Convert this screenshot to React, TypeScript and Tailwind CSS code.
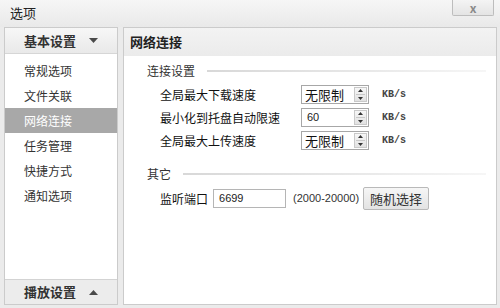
import React from "react";

const cjk = { fontFamily: '"Noto Sans CJK SC", "Noto Sans", sans-serif' };

const navItems = ["常规选项", "文件关联", "网络连接", "任务管理", "快捷方式", "通知选项"];

function Triangle({ up }: { up?: boolean }) {
  return (
    <svg width="9" height="5" viewBox="0 0 9 5">
      <path d={up ? "M0 5 L4.5 0 L9 5 Z" : "M0 0 L9 0 L4.5 5 Z"} fill="#4a4a4a" />
    </svg>
  );
}

function SpinBox({ value, ascii }: { value: string; ascii?: boolean }) {
  return (
    <div className="flex h-[19px] w-[68px] items-stretch border border-[#a7a7a7] bg-white">
      <div
        className={
          ascii
            ? "flex flex-1 items-center pl-[5px] text-[11px] text-[#222]"
            : "flex flex-1 items-center pl-[3px] text-[13px] text-[#111]"
        }
        style={ascii ? { fontFamily: '"Liberation Sans", sans-serif' } : undefined}
      >
        {value}
      </div>
      <div className="my-[1px] mr-[1px] flex w-[13px] flex-col items-center justify-center gap-[2px] border border-[#c9c9c9] bg-gradient-to-b from-[#f7f7f7] to-[#e2e2e2]">
        <svg width="5" height="3" viewBox="0 0 5 3">
          <path d="M0 3 L2.5 0 L5 3 Z" fill="#333" />
        </svg>
        <div className="h-px w-[9px] bg-[#c8c8c8]" />
        <svg width="5" height="3" viewBox="0 0 5 3">
          <path d="M0 0 L5 0 L2.5 3 Z" fill="#333" />
        </svg>
      </div>
    </div>
  );
}

function Unit() {
  return (
    <span
      className="ml-[13px] text-[10px] font-bold text-[#444]"
      style={{ fontFamily: '"Liberation Mono", monospace' }}
    >
      KB/s
    </span>
  );
}

function GroupTitle({ label }: { label: string }) {
  return (
    <div className="flex h-[16px] items-center pl-[23px] pr-[10px]">
      <span className="text-[12px] text-[#333]">{label}</span>
      <div className="ml-[12px] h-[2px] flex-1 bg-gradient-to-r from-[#d8d8d8] via-[#e6e6e6] to-[#f6f6f6]" />
    </div>
  );
}

export default function App() {
  return (
    <div className="flex h-[308px] w-[500px] flex-col bg-[#ebebeb]" style={cjk}>
      <div className="flex h-[27px] items-start justify-between bg-gradient-to-b from-[#f6f6f6] to-[#e9e9e9]">
        <span className="pl-[10px] pt-[4px] text-[13px] leading-[18px] text-[#222]">选项</span>
        <div className="mr-[6px] flex h-[16px] w-[42px] items-center justify-center rounded-b-[2px] border border-t-0 border-[#bdbdbd] bg-gradient-to-b from-[#f4f4f4] to-[#e4e4e4] text-[12px] font-bold leading-none text-[#8a8a8a]">
          x
        </div>
      </div>

      <div className="flex flex-1 gap-[5px] pb-[3px] pl-[4px] pr-[3px]">
        <div className="flex w-[114px] flex-col border border-[#cbcbcb] bg-white">
          <div className="flex h-[26px] items-center gap-[13px] border-b border-[#d6d6d6] bg-gradient-to-b from-[#f7f7f7] to-[#e9e9e9] pl-[19px]">
            <span className="text-[13px] font-bold text-[#333]">基本设置</span>
            <Triangle />
          </div>
          <div className="flex flex-1 flex-col pt-[4px]">
            {navItems.map((item) => (
              <div
                key={item}
                className={
                  item === "网络连接"
                    ? "flex h-[25px] items-center bg-[#a8a8a8] pl-[19px] text-[12px] text-white"
                    : "flex h-[25px] items-center pl-[19px] text-[12px] text-[#333]"
                }
              >
                {item}
              </div>
            ))}
          </div>
          <div className="flex h-[25px] items-center gap-[13px] border-t border-[#d3d3d3] bg-[#ececec] pl-[19px]">
            <span className="text-[13px] font-bold text-[#333]">播放设置</span>
            <Triangle up />
          </div>
        </div>

        <div className="flex flex-1 flex-col border border-[#cbcbcb] bg-white">
          <div className="flex h-[28px] items-center bg-gradient-to-b from-[#f3f3f3] to-[#ebebeb] pl-[6px]">
            <span className="text-[13px] font-bold text-[#222]">网络连接</span>
          </div>

          <div className="flex flex-col pt-[7px]">
            <GroupTitle label="连接设置" />
            <div className="mt-[4px] flex flex-col pl-[36px]">
              {[
                { label: "全局最大下载速度", value: "无限制", ascii: false },
                { label: "最小化到托盘自动限速", value: "60", ascii: true },
                { label: "全局最大上传速度", value: "无限制", ascii: false },
              ].map((row) => (
                <div key={row.label} className="flex h-[23px] items-center">
                  <span className="w-[141px] text-[12px] text-[#111]">{row.label}</span>
                  <SpinBox value={row.value} ascii={row.ascii} />
                  <Unit />
                </div>
              ))}
            </div>

            <div className="mt-[14px]">
              <GroupTitle label="其它" />
            </div>
            <div className="mt-[5px] flex h-[23px] items-center pl-[36px]">
              <span className="text-[12px] text-[#111]">监听端口</span>
              <div
                className="ml-[5px] flex h-[19px] w-[73px] items-center border border-[#b5b5b5] bg-white pl-[5px] text-[11px] text-[#222]"
                style={{ fontFamily: '"Liberation Sans", sans-serif' }}
              >
                6699
              </div>
              <span
                className="ml-[7px] text-[11px] text-[#333]"
                style={{ fontFamily: '"Liberation Sans", sans-serif' }}
              >
                (2000-20000)
              </span>
              <button className="ml-[4px] flex h-[23px] w-[66px] items-center justify-center rounded-[2px] border border-[#b9b9b9] bg-gradient-to-b from-[#f6f6f6] to-[#e3e3e3] text-[13px] text-[#333]">
                随机选择
              </button>
            </div>
          </div>
        </div>
      </div>
    </div>
  );
}
